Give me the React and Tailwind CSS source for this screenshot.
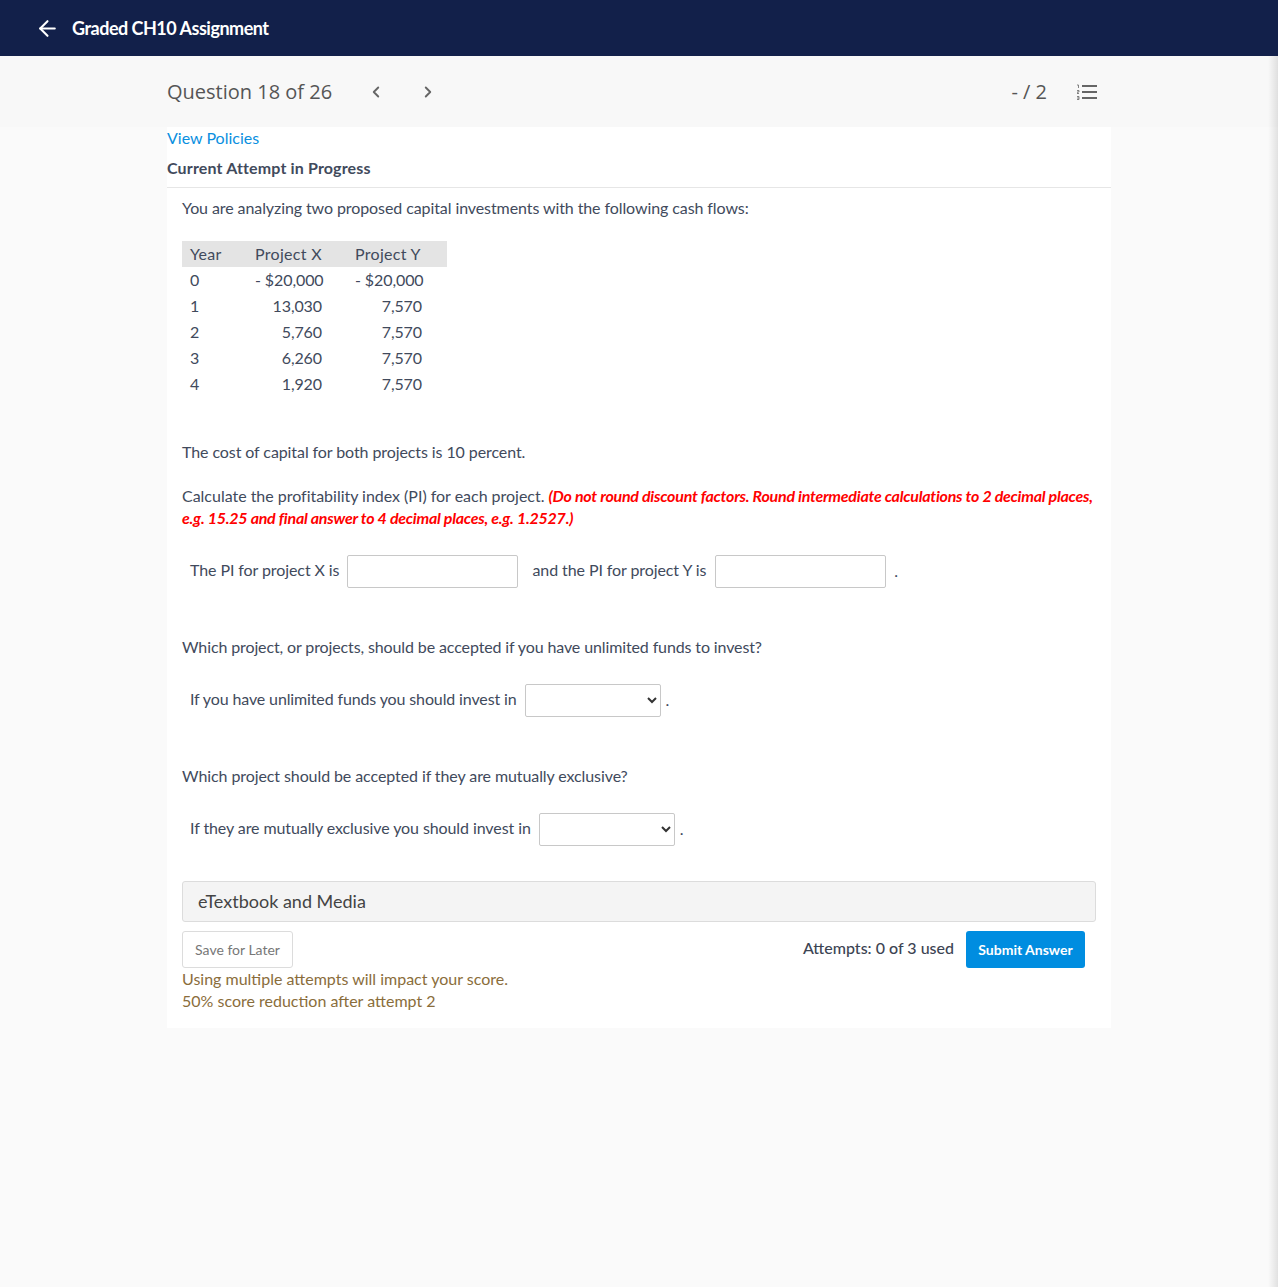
import { ArrowLeft, ChevronLeft, ChevronRight } from "lucide-react";

const rows = [
  ["0", "- $20,000", "- $20,000"],
  ["1", "13,030", "7,570"],
  ["2", "5,760", "7,570"],
  ["3", "6,260", "7,570"],
  ["4", "1,920", "7,570"],
];

function ListIcon() {
  return (
    <svg width="20" height="16" viewBox="0 0 20 16" fill="none" stroke="#666" strokeWidth="2">
      <path d="M5 2h15M5 8h15M5 14h15" />
      <path d="M0 1h1.5v3M0 6.5h2v1.5h-2v1.5h2M0 12.5h2v3h-2M0 14h2" strokeWidth="0.8" />
    </svg>
  );
}

function Select() {
  return <select className="w-[136px] h-[33px] bg-white border border-[#c8c8c8] rounded-[2px] text-[#333]" />;
}

function TextBox() {
  return <input type="text" className="w-[171px] h-[33px] bg-white border border-[#c8c8c8] rounded-[2px]" />;
}

export default function App() {
  return (
    <div className="relative min-h-[1287px] bg-[#fafafa] text-[#414a5c] font-['Lato',sans-serif] text-[16px]">
      <header className="h-14 bg-[#12204a] flex items-center pl-[35px] gap-[12px] text-white">
        <ArrowLeft size={25} strokeWidth={2} />
        <span className="font-bold text-[18px] tracking-[-0.5px]">Graded CH10 Assignment</span>
      </header>

      <div className="h-[71px] bg-[#f8f8f8]">
        <div className="w-[944px] h-full ml-[167px] flex items-center text-[#555]">
          <span className="text-[20px] font-['Open_Sans',sans-serif] whitespace-nowrap w-[165px]">Question 18 of 26</span>
          <ChevronLeft size={18} strokeWidth={2.5} className="ml-[35px] text-[#666]" />
          <ChevronRight size={18} strokeWidth={2.5} className="ml-[34px] text-[#666]" />
          <span className="ml-auto mr-[30px] text-[20px] font-['Open_Sans',sans-serif]">- / 2</span>
          <span className="mr-[14px]"><ListIcon /></span>
        </div>
      </div>

      <div className="w-[944px] ml-[167px]">
        <div className="bg-white pb-[16px] tracking-[-0.09px]">
          <div className="h-[61px] border-b border-[#e6e6e6]">
            <a className="block text-[#0a8fe0] leading-[22px] tracking-normal">View Policies</a>
            <div className="font-bold text-[#414a5c] mt-[8px] leading-[22px] tracking-[0.15px]">Current Attempt in Progress</div>
          </div>

          <div className="pl-[15px] pr-[15px] pt-[9px]">
            <p className="leading-[22px]">You are analyzing two proposed capital investments with the following cash flows:</p>

            <table className="mt-[22px] w-[265px] table-fixed border-collapse">
              <thead>
                <tr className="bg-[#e4e4e4] h-[26px] tracking-[0.3px]">
                  <td className="pl-2 w-[73px]">Year</td>
                  <td className="w-[100px]">Project X</td>
                  <td>Project Y</td>
                </tr>
              </thead>
              <tbody>
                {rows.map((r) => (
                  <tr key={r[0]} className="h-[26px]">
                    <td className="pl-2">{r[0]}</td>
                    <td className="text-right pr-[33px] whitespace-nowrap">{r[1]}</td>
                    <td className="text-right pr-[25px] whitespace-nowrap">{r[2]}</td>
                  </tr>
                ))}
              </tbody>
            </table>

            <p className="mt-[44px] leading-[22px]">The cost of capital for both projects is 10 percent.</p>
            <p className="mt-[22px] leading-[22px] tracking-[-0.02px]">
              Calculate the profitability index (PI) for each project.{" "}
              <em className="font-bold text-[#ff0000] tracking-[-0.25px]">
                (Do not round discount factors. Round intermediate calculations to 2 decimal places, e.g. 15.25 and final answer to 4 decimal places, e.g. 1.2527.)
              </em>
            </p>

            <div className="mt-[26px] pl-2 h-[33px] flex items-center whitespace-pre">
              <span className="mb-[3px]">The PI for project X is</span>
              <span className="ml-2 flex"><TextBox /></span>
              <span className="ml-[14px] mb-[3px]">and the PI for project Y is</span>
              <span className="ml-[9px] flex"><TextBox /></span>
              <span className="ml-2 mb-[2px]">.</span>
            </div>

            <p className="mt-[48px] leading-[22px] tracking-[-0.12px]">Which project, or projects, should be accepted if you have unlimited funds to invest?</p>

            <div className="mt-[26px] pl-2 h-[33px] flex items-center">
              <span className="mb-[3px] tracking-[-0.13px]">If you have unlimited funds you should invest in</span>
              <span className="ml-2 flex"><Select /></span>
              <span className="ml-[5px] mb-[2px]">.</span>
            </div>

            <p className="mt-[48px] leading-[22px]">Which project should be accepted if they are mutually exclusive?</p>

            <div className="mt-[26px] pl-2 h-[33px] flex items-center">
              <span className="mb-[3px]">If they are mutually exclusive you should invest in</span>
              <span className="ml-2 flex"><Select /></span>
              <span className="ml-[5px] mb-[2px]">.</span>
            </div>

            <div className="mt-[35px] h-[41px] flex items-center pl-[15px] bg-[#f4f4f4] border border-[#dcdcdc] rounded-[3px] text-[18px] text-[#444] tracking-normal">
              eTextbook and Media
            </div>

            <div className="mt-[9px] flex justify-between items-start">
              <button className="w-[111px] h-[37px] border border-[#dcdcdc] rounded-[3px] bg-white text-[14px] text-[#777] tracking-normal">Save for Later</button>
              <div className="flex items-center mr-[11px]">
                <span className="font-medium mr-3 mb-[3px] tracking-normal text-[#3c4453]">Attempts: 0 of 3 used</span>
                <button className="w-[119px] h-[37px] rounded-[3px] bg-[#008de0] text-white text-[14px] font-bold tracking-normal">Submit Answer</button>
              </div>
            </div>

            <div className="text-[#8a6d3b] leading-[22px] tracking-normal">
              <div>Using multiple attempts will impact your score.</div>
              <div>50% score reduction after attempt 2</div>
            </div>
          </div>
        </div>
      </div>

      {/* scrollbar shadow along the right edge */}
      <div className="absolute top-14 bottom-0 right-0 w-[10px] bg-gradient-to-r from-transparent to-black/10" />
    </div>
  );
}
